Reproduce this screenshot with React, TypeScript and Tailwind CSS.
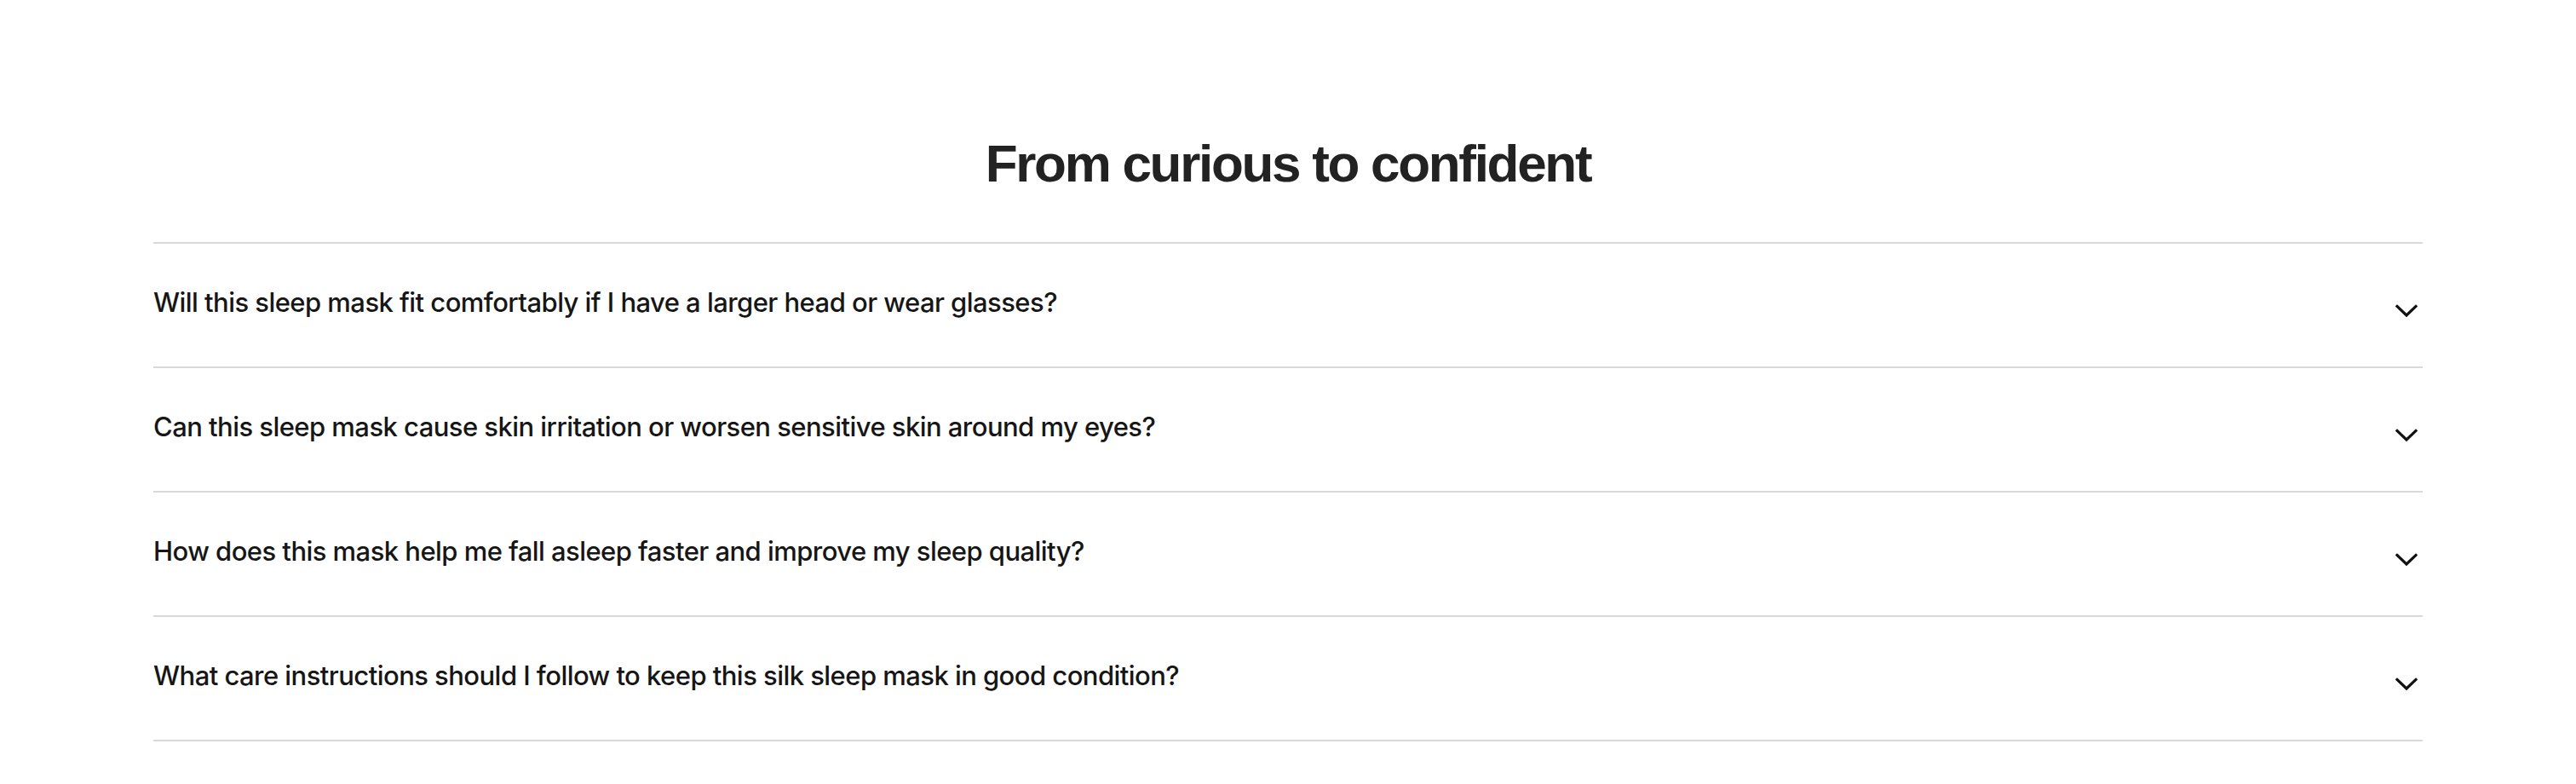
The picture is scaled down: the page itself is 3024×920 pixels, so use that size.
const questions = [
  "Will this sleep mask fit comfortably if I have a larger head or wear glasses?",
  "Can this sleep mask cause skin irritation or worsen sensitive skin around my eyes?",
  "How does this mask help me fall asleep faster and improve my sleep quality?",
  "What care instructions should I follow to keep this silk sleep mask in good condition?",
];

function Chevron() {
  return (
    <svg width="26" height="16" viewBox="0 0 26 16" fill="none" className="block">
      <polyline
        points="2,2.5 13,13 24,2.5"
        stroke="#111"
        strokeWidth="3.2"
        strokeLinecap="square"
        strokeLinejoin="miter"
      />
    </svg>
  );
}

export default function App() {
  return (
    <div className="min-h-screen bg-white pt-[161px] font-['Liberation_Sans',Arial,sans-serif]">
      <div className="mx-auto w-[2664px]">
        <h2 className="text-center text-[62px] font-bold leading-none tracking-[-2.3px] text-[#222]">
          From curious to confident
        </h2>
        <div className="mt-[61px] border-t-2 border-[#d9d9d9]">
          {questions.map((q) => (
            <button
              key={q}
              type="button"
              className="flex h-[146px] w-full items-center justify-between border-b-2 border-[#d9d9d9] text-left"
            >
              <span className="pb-2 font-['Inter',sans-serif] text-[31px] font-medium leading-none tracking-[-0.55px] text-[#161616]">
                {q}
              </span>
              <span className="mr-[6px] pt-[13px]">
                <Chevron />
              </span>
            </button>
          ))}
        </div>
      </div>
    </div>
  );
}
